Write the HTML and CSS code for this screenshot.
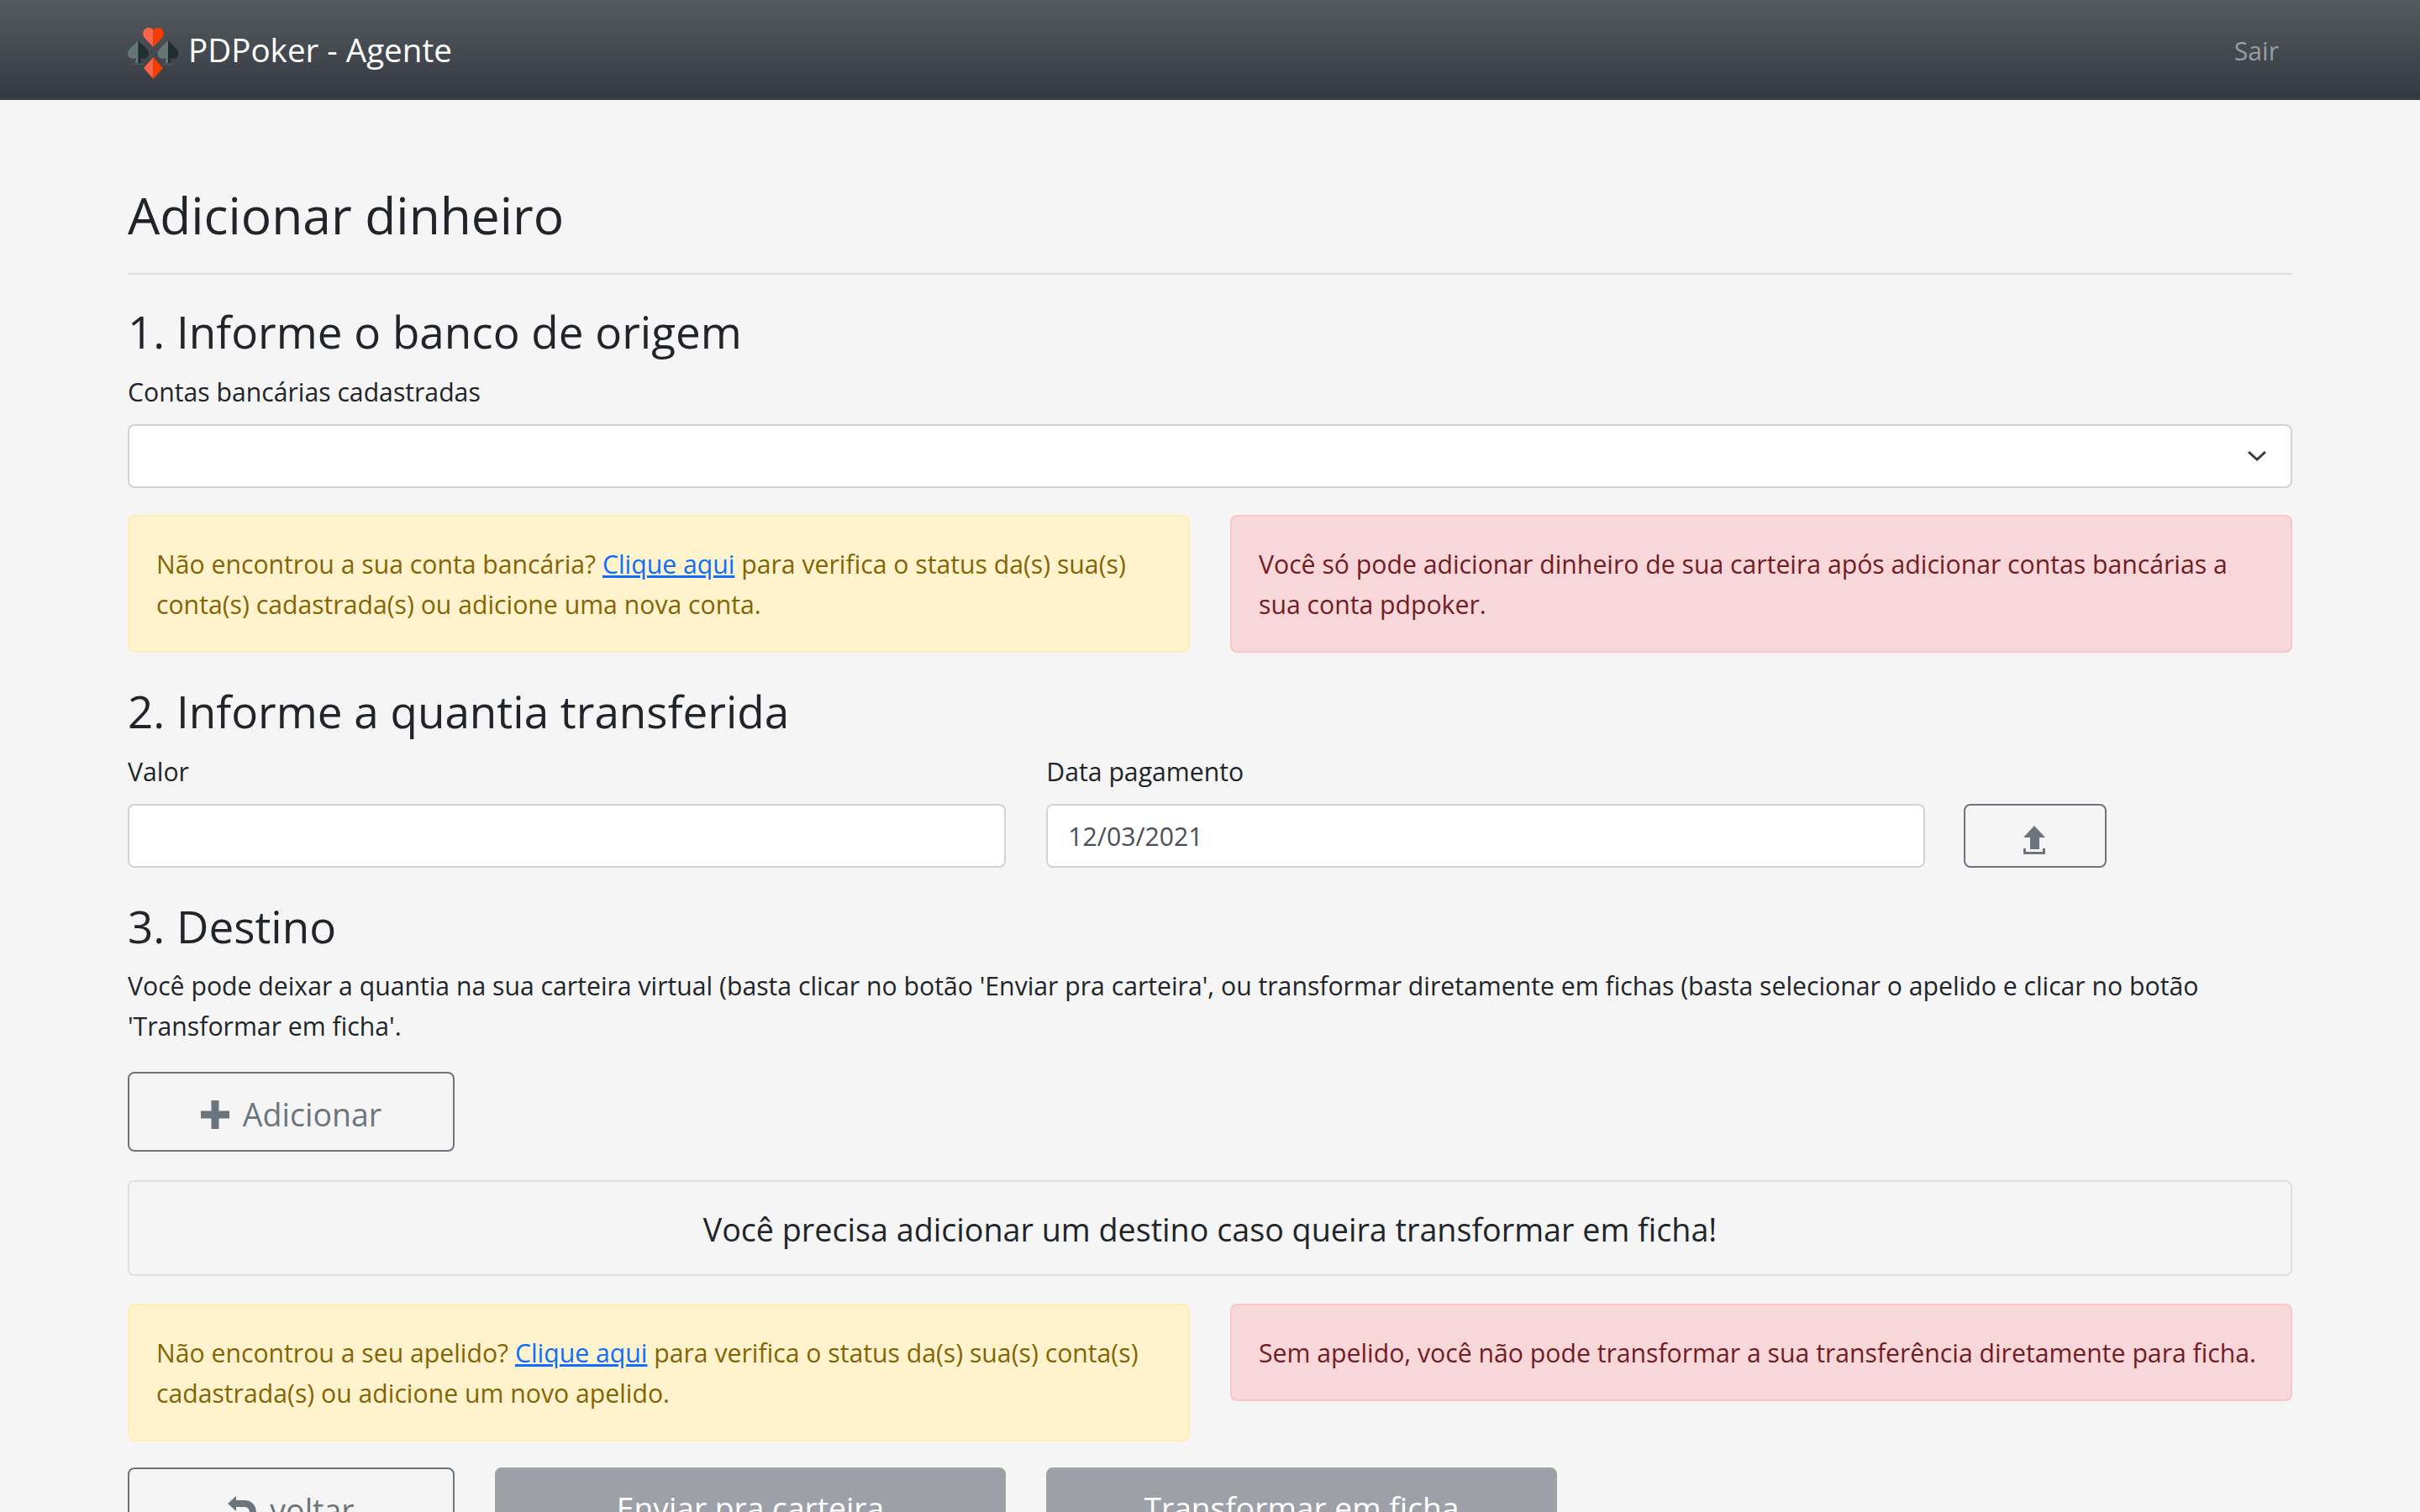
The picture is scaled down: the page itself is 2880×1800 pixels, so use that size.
FILE: index.html
```html
<!DOCTYPE html>
<html lang="pt-BR">
	<head>
		<title>PDPoker - Agente</title>
		<meta charset="utf-8">
		<link rel="stylesheet" href="styles.css">
	</head>
	<body>
		<nav class="navbar">
			<a class="brand" href="#">
				<svg class="brand-logo" viewBox="0 0 61 61">
					<path d="M30.500 23 L20 12 C16 7 19 0 25 0 C27.500 0 29.500 1 30.500 3 Z" fill="#ff6347"/>
					<path d="M30.500 23 L41 12 C45 7 42 0 36 0 C33.500 0 31.500 1 30.500 3 Z" fill="#f53d00"/>
					<path d="M30.500 35 L19 48 L30.500 61 Z" fill="#ff6347"/>
					<path d="M30.500 35 L42 48 L30.500 61 Z" fill="#f53d00"/>
					<g id="spade">
						<path d="M12.500 15 C8 21 0 25 0 31 C0 36 5 38 10 36 L9 42 H12.500 Z" fill="#667674"/>
						<path d="M12.500 15 C17 21 25 25 25 31 C25 36 20 38 15 36 L16 42 H12.500 Z" fill="#1f2f2e"/>
						<path d="M6 42.500 H19 V44.500 H6 Z" fill="#4a5a58"/>
					</g>
					<use href="#spade" x="35.500"/>
				</svg>
				<span class="brand-name">PDPoker - Agente</span>
			</a>
			<a class="nav-link" href="#">Sair</a>
		</nav>
		<main class="container">
			<h1 class="page-title">Adicionar dinheiro</h1>
			<hr class="divider">

			<h2 class="step-first">1. Informe o banco de origem</h2>
			<label class="label">Contas bancárias cadastradas</label>
			<div class="select">
				<svg viewBox="0 0 22 14" width="22" height="14" fill="none" stroke="#343a40" stroke-width="3">
					<path d="M1 2 L11 11 L21 2"/>
				</svg>
			</div>
			<div class="row alerts">
				<div class="alert alert-warning">Não encontrou a sua conta bancária? <a href="#">Clique aqui</a> para verifica o status da(s) sua(s) conta(s) cadastrada(s) ou adicione uma nova conta.</div>
				<div class="alert alert-danger">Você só pode adicionar dinheiro de sua carteira após adicionar contas bancárias a sua conta pdpoker.</div>
			</div>

			<h2>2. Informe a quantia transferida</h2>
			<div class="row amount">
				<div class="field">
					<label class="label">Valor</label>
					<div class="input"></div>
				</div>
				<div class="field">
					<label class="label">Data pagamento</label>
					<div class="input">12/03/2021</div>
				</div>
				<button class="btn btn-upload">
					<svg viewBox="0 0 26 34" width="26" height="34" fill="#6c757d">
						<path d="M13 0 L26 14 H19 V28 H8 V14 H0 Z"/>
						<path d="M0 27 H3 V31 H23 V27 H26 V34 H0 Z"/>
					</svg>
				</button>
			</div>

			<h2>3. Destino</h2>
			<p class="intro">Você pode deixar a quantia na sua carteira virtual (basta clicar no botão 'Enviar pra carteira', ou transformar diretamente em fichas (basta selecionar o apelido e clicar no botão 'Transformar em ficha'.</p>
			<button class="btn btn-add">
				<svg viewBox="0 0 34 34" width="34" height="34" fill="#6c757d">
					<path d="M12.500 0 H21.500 V12.500 H34 V21.500 H21.500 V34 H12.500 V21.500 H0 V12.500 H12.500 Z"/>
				</svg>
				Adicionar
			</button>
			<div class="notice">Você precisa adicionar um destino caso queira transformar em ficha!</div>
			<div class="row alerts">
				<div class="alert alert-warning">Não encontrou a seu apelido? <a href="#">Clique aqui</a> para verifica o status da(s) sua(s) conta(s) cadastrada(s) ou adicione um novo apelido.</div>
				<div class="alert alert-danger">Sem apelido, você não pode transformar a sua transferência diretamente para ficha.</div>
			</div>
			<div class="actions">
				<button class="btn btn-back">
					<svg viewBox="0 0 34 34" width="34" height="34" fill="none" stroke="#6c757d" stroke-width="8">
						<path d="M8 9 H20 C27 9 30 14 30 20 C30 26 27 30 20 31"/>
						<path d="M10 0 L0 9 L10 18 Z" fill="#6c757d" stroke="none"/>
					</svg>
					voltar
				</button>
				<button class="btn btn-disabled">Enviar pra carteira</button>
				<button class="btn btn-disabled">Transformar em ficha</button>
			</div>
		</main>
	</body>
</html>
```
FILE: styles.css
```css
html {
	font: 30.200px 'Open Sans', sans-serif;
}
body {
	margin: 0;
	height: 1800px;
	overflow: hidden;
	background-color: #f5f5f5;
	color: #212529;
	font-family: 'Open Sans', sans-serif;
	font-size: 30.200px;
	line-height: 48px;
}
.navbar {
	height: 119px;
	padding: 0 152px;
	display: flex;
	align-items: center;
	justify-content: space-between;
	background: linear-gradient(#565b60, #343841);
}
.brand {
	display: flex;
	align-items: center;
	gap: 11px;
	color: #fff;
	font-size: 38.600px;
	text-decoration: none;
}
.brand-logo {
	width: 61px;
	height: 61px;
	margin-top: 8px;
}
.brand-name {
	margin-bottom: 2px;
}
.nav-link {
	padding: 2px 16px 0 0;
	color: #9a9da0;
	text-decoration: none;
}
.container {
	padding: 0 152px;
}
.page-title {
	margin: 98px 0 0;
	font-size: 60.500px;
	font-weight: 400;
	line-height: 77px;
}
.divider {
	margin: 31px 0 0;
	border: 0;
	border-top: 2px solid #dfe0e1;
}
h2 {
	margin: 36px 0 14px;
	font-size: 53px;
	font-weight: 400;
	line-height: 67px;
}
.step-first {
	margin-top: 34px;
}
.label {
	display: block;
	padding-top: 1px;
	margin-bottom: 14px;
}
.select {
	height: 72px;
	padding-right: 20px;
	display: flex;
	align-items: center;
	justify-content: flex-end;
	background: #fff;
	border: 2px solid #ced4da;
	border-radius: 8px;
}
.select svg {
	margin-right: 9px;
}
.row {
	display: flex;
	gap: 48px;
}
.alerts {
	margin-top: 32px;
	align-items: flex-start;
}
.alert {
	flex: 1;
	padding: 33px 32px 31px;
	border: 2px solid;
	border-radius: 8px;
}
.alert-warning {
	color: #856404;
	background: #fff3cd;
	border-color: #ffeeba;
}
.alert-danger {
	color: #721c24;
	background: #f8d7da;
	border-color: #f5c6cb;
}
.alert a {
	color: #0d6efd;
}
.btn {
	font: inherit;
	background: transparent;
	border: 2px solid #6c757d;
	border-radius: 8px;
	color: #6c757d;
	display: flex;
	align-items: center;
	justify-content: center;
	gap: 16px;
	box-sizing: border-box;
}
.field {
	width: 1045.330px;
}
.input {
	height: 70px;
	padding: 2px 24px 0;
	display: flex;
	align-items: center;
	background: #fff;
	border: 2px solid #ced4da;
	border-radius: 8px;
	color: #495057;
}
.btn-upload {
	width: 170px;
	height: 76px;
	align-self: flex-end;
	margin-left: -2px;
	padding: 9px 2px 0 0;
}
.intro {
	margin: 0 0 30px;
}
.btn-add, .btn-back {
	width: 389px;
	height: 95px;
	padding-top: 7px;
	font-size: 37.500px;
}
.notice {
	margin-top: 34px;
	padding: 27px 24px 23px;
	text-align: center;
	font-size: 37.700px;
	line-height: 60px;
	border: 2px solid #dfe0e1;
	border-radius: 8px;
}
.notice + .alerts {
	margin-top: 33px;
}
.actions {
	margin-top: 31px;
	display: flex;
	gap: 48px;
}
.btn-disabled {
	width: 608px;
	height: 96px;
	font-size: 37.200px;
	color: #fff;
	background: #9da1a7;
	border-color: #9da1a7;
}
```
